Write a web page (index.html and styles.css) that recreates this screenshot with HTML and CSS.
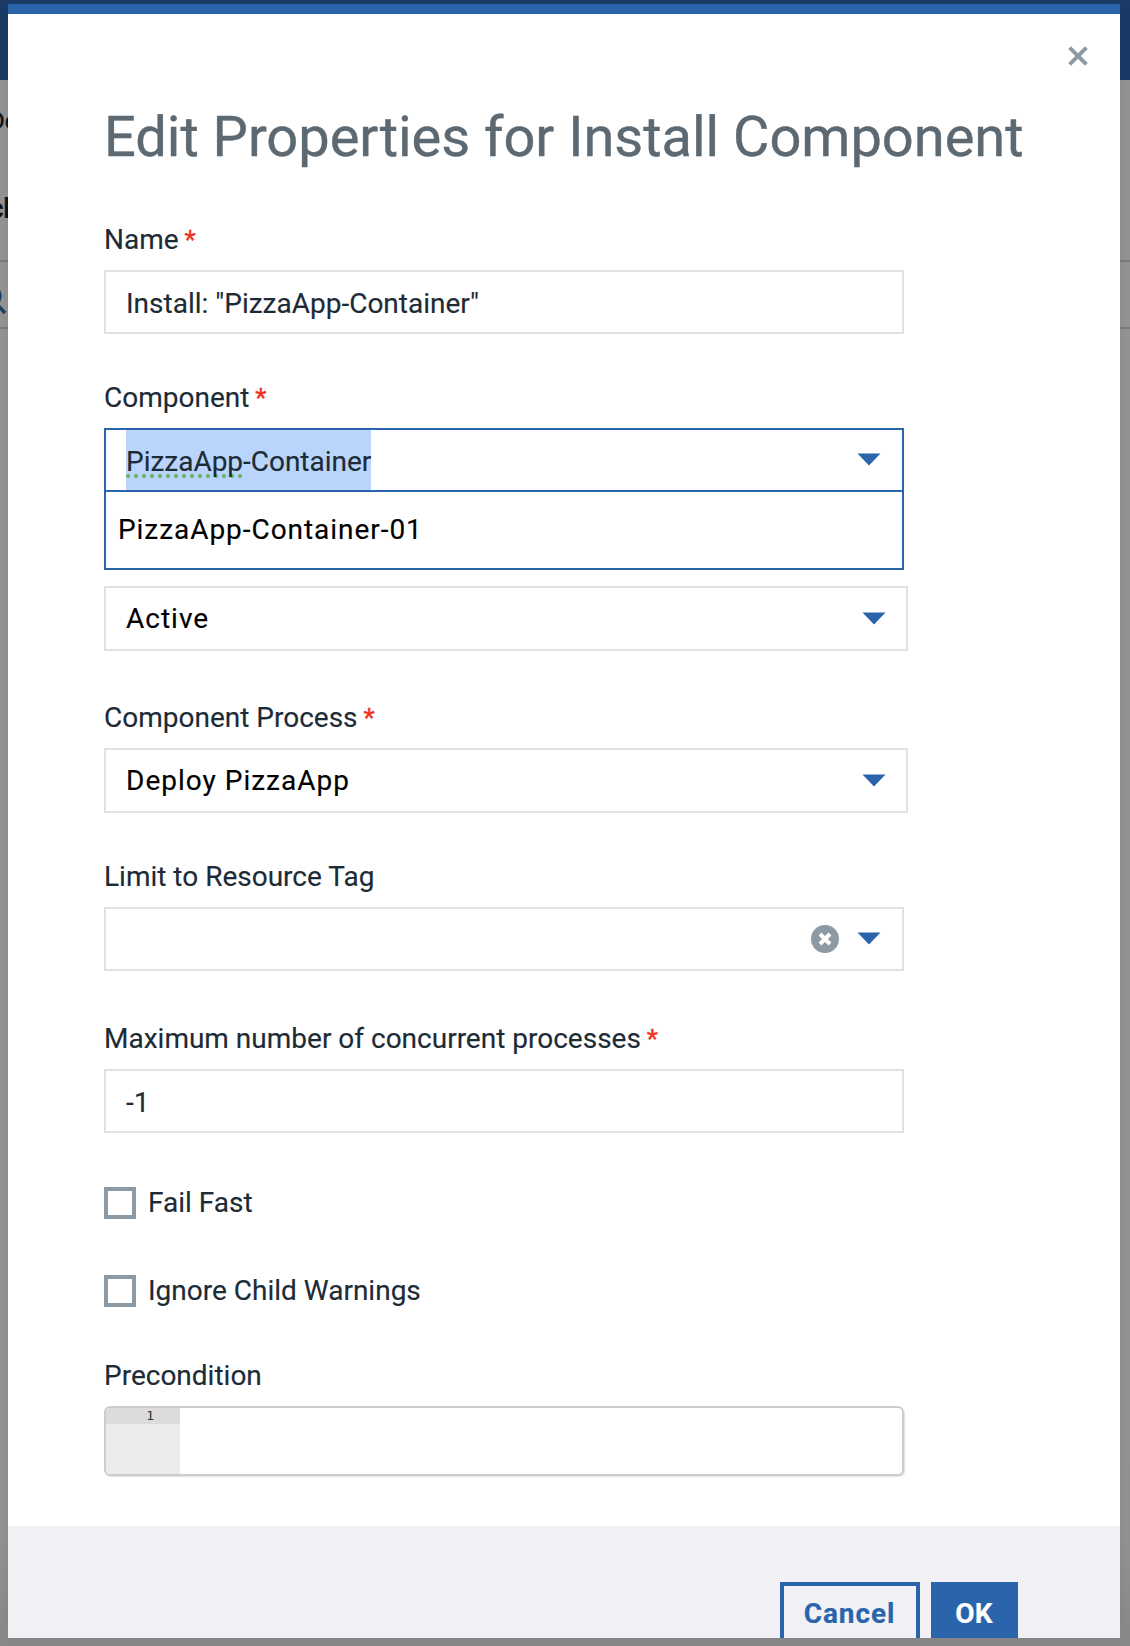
FILE: index.html
```html
<!DOCTYPE html>
<html lang="en">
<head>
<meta charset="utf-8">
<title>Edit Properties for Install Component</title>
<link rel="stylesheet" href="styles.css">
</head>
<body>
<div class="page">
  <div class="topbar"></div>
  <div class="crumb">De</div>
  <div class="heading">ch</div>
  <div class="search">
    <svg width="32" height="32" viewBox="0 0 32 32"><circle cx="13" cy="12" r="10"/><path d="M19 19l9 10"/></svg>
  </div>
</div>

<div class="modal">
  <button class="close" aria-label="Close">
    <svg width="20" height="20" viewBox="0 0 20 20"><path d="M1.6 1.6l16.8 16.8M18.4 1.6L1.6 18.4"/></svg>
  </button>
  <h1 class="title">Edit Properties for Install Component</h1>

  <form class="form">
    <div class="field">
      <div class="label">Name <span class="req">*</span></div>
      <div class="input">Install: "PizzaApp-Container"</div>
    </div>

    <div class="field component">
      <div class="label">Component <span class="req">*</span></div>
      <div class="input active">
        <span class="selected"><span class="spell">PizzaApp</span>-Container</span>
        <svg class="arrow" width="24" height="13" viewBox="0 0 24 13"><path d="M.5.6h23L12 12.6z"/></svg>
      </div>
      <div class="menu">PizzaApp-Container-01</div>
    </div>

    <div class="field version">
      <div class="select">Active
        <svg class="arrow" width="24" height="13" viewBox="0 0 24 13"><path d="M.5.6h23L12 12.6z"/></svg>
      </div>
    </div>

    <div class="field process">
      <div class="label">Component Process <span class="req">*</span></div>
      <div class="select">Deploy PizzaApp
        <svg class="arrow" width="24" height="13" viewBox="0 0 24 13"><path d="M.5.6h23L12 12.6z"/></svg>
      </div>
    </div>

    <div class="field">
      <div class="label">Limit to Resource Tag</div>
      <div class="input tag">
        <svg class="clear" width="28" height="28" viewBox="0 0 28 28"><circle cx="14" cy="14" r="14"/><path d="M9 9l10 10M19 9L9 19"/></svg>
        <svg class="arrow" width="24" height="13" viewBox="0 0 24 13"><path d="M.5.6h23L12 12.6z"/></svg>
      </div>
    </div>

    <div class="field maximum">
      <div class="label">Maximum number of concurrent processes <span class="req">*</span></div>
      <div class="input">-1</div>
    </div>

    <div class="check fail-fast"><span class="box"></span>Fail Fast</div>
    <div class="check ignore"><span class="box"></span>Ignore Child Warnings</div>

    <div class="field precondition">
      <div class="label">Precondition</div>
      <div class="editor">
        <div class="gutter"><div class="line-number">1</div></div>
      </div>
    </div>
  </form>

  <div class="footer">
    <div class="button cancel">Cancel</div>
    <div class="button ok">OK</div>
  </div>
</div>
</body>
</html>
```
FILE: styles.css
```css
* { box-sizing: border-box; }

body {
  margin: 0;
  width: 1130px;
  height: 1646px;
  overflow: hidden;
  position: relative;
  font-family: Roboto, "Liberation Sans", sans-serif;
  font-size: 28px;
  color: #1c2b36;
  -webkit-text-stroke: .15px;
}

.page {
  height: 1646px;
  overflow: hidden;
  background: linear-gradient(#949494, #929292 94%, #888);
}

.topbar {
  height: 80px;
  background: #1b3b66;
}

.crumb {
  height: 84px;
  padding-top: 27px;
  margin-left: -11px;
  font-size: 24px;
  line-height: 28px;
  color: #0c141b;
  -webkit-text-stroke: .5px;
}

.heading {
  height: 96px;
  padding-top: 29px;
  margin-left: -11px;
  font-weight: 700;
  line-height: 32px;
  color: #0c141b;
}

.search {
  height: 69px;
  padding-top: 22px;
  border-top: 2px solid #7b7b7b;
  border-bottom: 2px solid #7b7b7b;
}

.search svg {
  display: block;
  margin-left: -23px;
  fill: none;
  stroke: #1a4166;
  stroke-width: 3.4;
}

.modal {
  position: absolute;
  left: 8px;
  top: 4px;
  width: 1112px;
  height: 1634px;
  display: flex;
  flex-direction: column;
  overflow: hidden;
  border-top: 10px solid #2a65ac;
  background: #fff;
  box-shadow: 0 0 16px rgba(0, 0, 0, .06);
}

.close {
  align-self: flex-end;
  height: 20px;
  margin: 32px 32px 0 0;
  padding: 0;
  border: 0;
  background: none;
}

.close svg { display: block; }

.close path {
  fill: none;
  stroke: #8d9aa4;
  stroke-width: 4;
}

.title {
  height: 66px;
  margin: 38px 0 0 96px;
  font-size: 56px;
  font-weight: 400;
  line-height: 66px;
  letter-spacing: -.02px;
  color: #5d6972;
  white-space: nowrap;
  -webkit-text-stroke: .4px #5d6972;
}

.form {
  width: 804px;
  height: 1303px;
  flex: none;
  margin: 53px 0 0 96px;
}

.field { margin-bottom: 47px; }

.label {
  height: 32px;
  margin-bottom: 15px;
  line-height: 34px;
  white-space: nowrap;
}

.req {
  margin-left: -1px;
  font-size: 26px;
  color: #ee3224;
  -webkit-text-stroke: .4px;
}

.input, .select {
  display: flex;
  align-items: center;
  width: 800px;
  height: 64px;
  padding-left: 20px;
  border: 2px solid #dfe3e6;
  line-height: 32px;
  background: #fff;
}

.input { padding-top: 4px; }

.select {
  width: 804px;
  height: 65px;
  letter-spacing: 1px;
  color: #000;
}

.input.tag { padding-top: 0; }

.input.active {
  padding-top: 0;
  border-color: #2a65ac;
}

.selected {
  height: 60px;
  line-height: 64px;
  letter-spacing: -.02px;
  background: #bad5fb;
}

.spell {
  background: radial-gradient(circle, #6cb66c 1.8px, transparent 2.3px) -2px 100% / 8px 4px repeat-x;
}

.arrow {
  flex: none;
  margin: 0 21px 0 auto;
  fill: #2a65ac;
}

.active .arrow, .tag .arrow { margin-bottom: 1px; }
.select .arrow { margin-right: 20.5px; }

.clear {
  flex: none;
  margin-left: auto;
}

.clear + .arrow { margin-left: 18px; }
.clear circle { fill: #8d99a3; }
.clear path { stroke: #fff; stroke-width: 4; }

.component {
  position: relative;
  margin-bottom: 94px;
}

.menu {
  position: absolute;
  left: 0;
  top: 109px;
  width: 800px;
  height: 80px;
  padding: 22px 12px 0;
  border: 2px solid #2a65ac;
  line-height: 32px;
  letter-spacing: .95px;
  color: #000;
  background: #fff;
}

.version { margin-bottom: 50px; }
.maximum { margin-top: 51px; margin-bottom: 54px; }

.check {
  display: flex;
  height: 32px;
  gap: 12px;
  line-height: 32px;
}

.box {
  width: 32px;
  height: 32px;
  border: 4px solid #8d99a3;
}

.fail-fast { margin-bottom: 56px; }
.ignore { margin-bottom: 52px; }
.precondition { margin-bottom: 0; }

.editor {
  width: 800px;
  height: 70px;
  overflow: hidden;
  border: 2px solid #ccc;
  border-radius: 6px;
  box-shadow: 1px 1px 1px rgba(0, 0, 0, .12);
}

.gutter {
  width: 74px;
  height: 66px;
  background: #ebebeb;
}

.line-number {
  height: 16px;
  padding-right: 26px;
  font: 13px/16px "DejaVu Sans Mono", monospace;
  text-align: right;
  color: #333;
  background: #dcdcdc;
  -webkit-text-stroke: 0;
}

.footer {
  flex: none;
  display: flex;
  justify-content: flex-end;
  gap: 11px;
  height: 112px;
  padding: 56px 102px 0 0;
  background: #f0f2f6;
}

.button {
  height: 64px;
  border: 4px solid #2a65ac;
  padding-top: 12px;
  font-weight: 700;
  line-height: 32px;
  letter-spacing: .9px;
  text-align: center;
  color: #2a65ac;
}

.cancel { width: 140px; padding-right: 1px; }
.ok { width: 87px; padding-right: 1px; color: #fff; background: #2a65ac; letter-spacing: .2px; }
```
